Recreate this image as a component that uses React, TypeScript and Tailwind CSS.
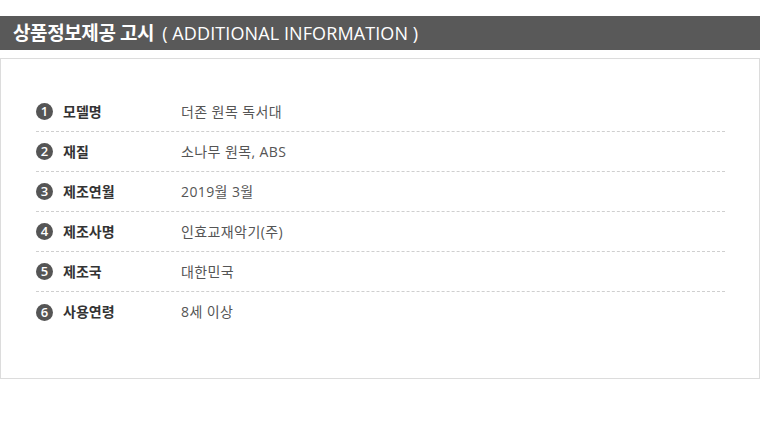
import React from "react";

const rows: [string, string][] = [
  ["모델명", "더존 원목 독서대"],
  ["재질", "소나무 원목, ABS"],
  ["제조연월", "2019월 3월"],
  ["제조사명", "인효교재악기(주)"],
  ["제조국", "대한민국"],
  ["사용연령", "8세 이상"],
];

export default function App() {
  return (
    <div
      className="w-[760px] h-[430px] bg-white pt-[16px]"
      style={{ fontFamily: '"Open Sans", "Noto Sans CJK KR", sans-serif' }}
    >
      <div className="h-[34px] bg-[#595959] flex items-center pl-[13px] text-white leading-none">
        <span className="text-[19px] font-bold tracking-[-0.4px]">상품정보제공 고시</span>
        <span className="ml-[8px] text-[18px] font-medium tracking-[0.1px]">( ADDITIONAL INFORMATION )</span>
      </div>
      <div className="mt-[8px] h-[321px] border border-[#dcdcdc] pt-[33px] pl-[35px] pr-[34px]">
        {rows.map(([k, v], i) => (
          <div
            key={k}
            className={
              "h-[40px] flex items-center " +
              (i < rows.length - 1 ? "border-b border-dashed border-[#cfcfcf]" : "")
            }
          >
            <div className="w-[17px] h-[17px] rounded-full bg-[#555555] flex items-center justify-center text-white text-[13px] font-semibold leading-none">
              {i + 1}
            </div>
            <div className="ml-[10px] w-[118px] text-[14px] font-semibold text-[#333333] leading-none">{k}</div>
            <div className="text-[14px] text-[#555555] leading-none tracking-[0.4px]">{v}</div>
          </div>
        ))}
      </div>
    </div>
  );
}
